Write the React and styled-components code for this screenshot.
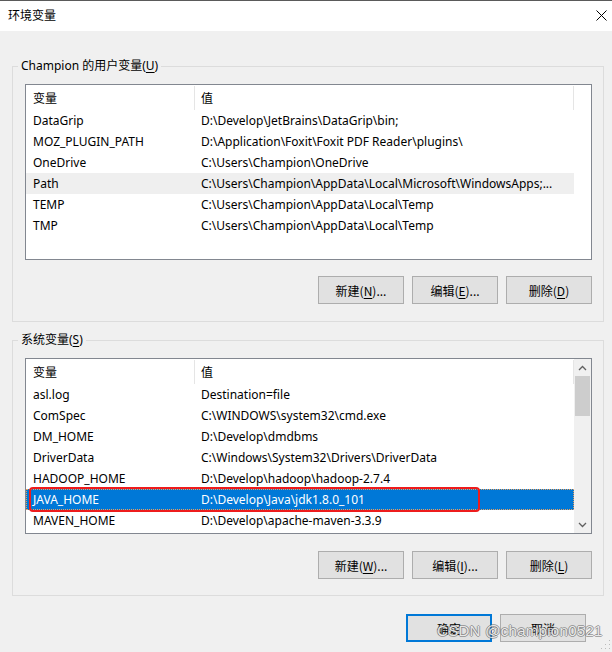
import React from "react";
import styled, { createGlobalStyle } from "styled-components";

const GlobalStyle = createGlobalStyle`
  html, body {
    margin: 0;
    padding: 0;
    background: #f0f0f0;
  }
  body {
    font-family: "Noto Sans", "Noto Sans CJK SC", sans-serif;
    font-size: 12px;
    color: #000;
  }
`;

const Window = styled.div`
  position: relative;
  width: 612px;
  height: 652px;
  overflow: hidden;
  background: #f0f0f0;
  display: flex;
  flex-direction: column;
`;

const TitleBar = styled.div`
  height: 30px;
  box-sizing: content-box;
  border-top: 1px solid #5a5a5a;
  background: #fff;
  display: flex;
  align-items: center;
  justify-content: space-between;
  padding: 0 5px 0 8px;
  font-family: "Noto Sans CJK SC", sans-serif;
  font-size: 12px;
  line-height: 12px;
  span {
    margin-top: -2px;
  }
`;

const CloseButton = styled.div`
  width: 12px;
  height: 12px;
  margin-top: -2px;
  display: flex;
  align-items: center;
  justify-content: center;
`;

const Content = styled.div`
  display: flex;
  flex-direction: column;
  padding: 0 8px 0 12px;
`;

const Group = styled.div`
  margin-top: ${(p) => p.$top}px;
  border: 1px solid #dcdcdc;
  padding: 0 11px ${(p) => p.$bottom}px 12px;
`;

const Legend = styled.div`
  width: fit-content;
  margin: -9px 0 0 -7px;
  padding: 0 3px;
  line-height: 16px;
  background: #f0f0f0;
`;

const Mnemonic = styled.span`
  text-decoration: underline;
  text-underline-offset: 2px;
`;

const ListView = styled.div`
  margin-top: 10px;
  height: 174px;
  border: 1px solid #828790;
  background: #fff;
  display: flex;
`;

const Table = styled.div`
  width: 548px;
  display: flex;
  flex-direction: column;
`;

const HeaderRow = styled.div`
  display: flex;
  height: 25px;
`;

const HeaderCell = styled.div`
  width: ${(p) => p.$w}px;
  box-sizing: border-box;
  padding-left: ${(p) => p.$pad}px;
  display: flex;
  align-items: center;
  font-family: "Noto Sans CJK SC", sans-serif;
  position: relative;
  &::after {
    content: "";
    position: absolute;
    right: 0;
    top: 1px;
    bottom: 0;
    width: 1px;
    background: #e5e5e5;
  }
`;

const Row = styled.div`
  position: relative;
  display: flex;
  height: 21px;
  background: ${(p) => (p.$selected ? "#0078d7" : p.$hover ? "#efefef" : "transparent")};
  color: ${(p) => (p.$selected ? "#fff" : "#000")};
  outline: ${(p) => (p.$selected ? "1px dotted #e8a060" : "none")};
  outline-offset: -1px;
`;

const Cell = styled.div`
  width: ${(p) => p.$w}px;
  box-sizing: border-box;
  padding-left: ${(p) => p.$pad}px;
  display: flex;
  align-items: center;
  white-space: nowrap;
  overflow: hidden;
`;

const Highlight = styled.div`
  position: absolute;
  left: 3px;
  top: -2px;
  width: 447px;
  height: 21px;
  border: 2px solid #ee1c1c;
  border-radius: 4px;
  pointer-events: none;
`;

const ScrollBar = styled.div`
  margin-left: auto;
  width: 17px;
  background: #f0f0f0;
  display: flex;
  flex-direction: column;
  align-items: center;
`;

const ScrollArrow = styled.div`
  height: 17px;
  width: 17px;
  display: flex;
  align-items: center;
  justify-content: center;
`;

const ScrollTrack = styled.div`
  flex: 1;
  width: 15px;
`;

const Thumb = styled.div`
  height: 40px;
  background: #cdcdcd;
`;

const ButtonRow = styled.div`
  display: flex;
  justify-content: flex-end;
  gap: 8px;
  margin-top: ${(p) => p.$top}px;
  padding-right: ${(p) => p.$right || 0}px;
`;

const Button = styled.button`
  width: 86px;
  height: 28px;
  box-sizing: border-box;
  background: #e1e1e1;
  border: ${(p) => (p.$default ? "2px solid #0078d7" : "1px solid #adadad")};
  font-family: "Noto Sans CJK SC", "Noto Sans", sans-serif;
  font-size: 12px;
  color: #000;
  padding: 0;
  display: flex;
  align-items: center;
  justify-content: center;
`;

const Watermark = styled.div`
  position: absolute;
  left: 437px;
  top: 622px;
  font-family: "Liberation Sans", sans-serif;
  font-size: 15px;
  letter-spacing: 0.3px;
  color: rgba(255, 255, 255, 0.85);
  text-shadow: 1px 0 0 rgba(90, 90, 90, 0.5), -1px 0 0 rgba(90, 90, 90, 0.5),
    0 1px 0 rgba(90, 90, 90, 0.5), 0 -1px 0 rgba(90, 90, 90, 0.5);
  white-space: nowrap;
  pointer-events: none;
`;

const Grip = styled.svg`
  position: absolute;
  right: 1px;
  bottom: 2px;
`;

const userVars = [
  ["DataGrip", "D:\\Develop\\JetBrains\\DataGrip\\bin;"],
  ["MOZ_PLUGIN_PATH", "D:\\Application\\Foxit\\Foxit PDF Reader\\plugins\\"],
  ["OneDrive", "C:\\Users\\Champion\\OneDrive"],
  ["Path", "C:\\Users\\Champion\\AppData\\Local\\Microsoft\\WindowsApps;..."],
  ["TEMP", "C:\\Users\\Champion\\AppData\\Local\\Temp"],
  ["TMP", "C:\\Users\\Champion\\AppData\\Local\\Temp"],
];

const systemVars = [
  ["asl.log", "Destination=file"],
  ["ComSpec", "C:\\WINDOWS\\system32\\cmd.exe"],
  ["DM_HOME", "D:\\Develop\\dmdbms"],
  ["DriverData", "C:\\Windows\\System32\\Drivers\\DriverData"],
  ["HADOOP_HOME", "D:\\Develop\\hadoop\\hadoop-2.7.4"],
  ["JAVA_HOME", "D:\\Develop\\Java\\jdk1.8.0_101"],
  ["MAVEN_HOME", "D:\\Develop\\apache-maven-3.3.9"],
];

function Chevron({ up }) {
  return (
    <svg width="9" height="6" viewBox="0 0 9 6">
      <path
        d={up ? "M1 5 L4.5 1.5 L8 5" : "M1 1 L4.5 4.5 L8 1"}
        fill="none"
        stroke="#606060"
        strokeWidth="1.3"
      />
    </svg>
  );
}

function VarList({ rows, hover, selected, scroll }) {
  return (
    <ListView>
      <Table>
        <HeaderRow>
          <HeaderCell $w={169} $pad={7}>变量</HeaderCell>
          <HeaderCell $w={379} $pad={6}>值</HeaderCell>
        </HeaderRow>
        {rows.map(([name, value]) => (
          <Row key={name} $hover={name === hover} $selected={name === selected}>
            <Cell $w={169} $pad={7}>{name}</Cell>
            <Cell $w={379} $pad={6}>{value}</Cell>
            {name === selected && <Highlight />}
          </Row>
        ))}
      </Table>
      {scroll && (
        <ScrollBar>
          <ScrollArrow>
            <Chevron up />
          </ScrollArrow>
          <ScrollTrack>
            <Thumb />
          </ScrollTrack>
          <ScrollArrow>
            <Chevron />
          </ScrollArrow>
        </ScrollBar>
      )}
    </ListView>
  );
}

export default function App() {
  return (
    <Window>
      <GlobalStyle />
      <TitleBar>
        <span>环境变量</span>
        <CloseButton>
          <svg width="11" height="11" viewBox="0 0 11 11">
            <path d="M0.5 0.5 L10.5 10.5 M10.5 0.5 L0.5 10.5" stroke="#000" strokeWidth="1" />
          </svg>
        </CloseButton>
      </TitleBar>
      <Content>
        <Group $top={35} $bottom={17}>
          <Legend>
            Champion 的用户变量(<Mnemonic>U</Mnemonic>)
          </Legend>
          <VarList rows={userVars} hover="Path" />
          <ButtonRow $top={16}>
            <Button>新建(<Mnemonic>N</Mnemonic>)...</Button>
            <Button>编辑(<Mnemonic>E</Mnemonic>)...</Button>
            <Button>删除(<Mnemonic>D</Mnemonic>)</Button>
          </ButtonRow>
        </Group>
        <Group $top={18} $bottom={16}>
          <Legend>
            系统变量(<Mnemonic>S</Mnemonic>)
          </Legend>
          <VarList rows={systemVars} selected="JAVA_HOME" scroll />
          <ButtonRow $top={17}>
            <Button>新建(<Mnemonic>W</Mnemonic>)...</Button>
            <Button>编辑(<Mnemonic>I</Mnemonic>)...</Button>
            <Button>删除(<Mnemonic>L</Mnemonic>)</Button>
          </ButtonRow>
        </Group>
        <ButtonRow $top={18} $right={18}>
          <Button $default>确定</Button>
          <Button>取消</Button>
        </ButtonRow>
      </Content>
      <Watermark>CSDN @champion0521</Watermark>
      <Grip width="10" height="10" viewBox="0 0 10 10">
        <rect x="8" y="0" width="1" height="1" fill="#bbb" />
        <rect x="8" y="4" width="1" height="1" fill="#bbb" />
        <rect x="4" y="4" width="1" height="1" fill="#bbb" />
        <rect x="8" y="8" width="1" height="1" fill="#bbb" />
        <rect x="4" y="8" width="1" height="1" fill="#bbb" />
        <rect x="0" y="8" width="1" height="1" fill="#bbb" />
      </Grip>
    </Window>
  );
}
